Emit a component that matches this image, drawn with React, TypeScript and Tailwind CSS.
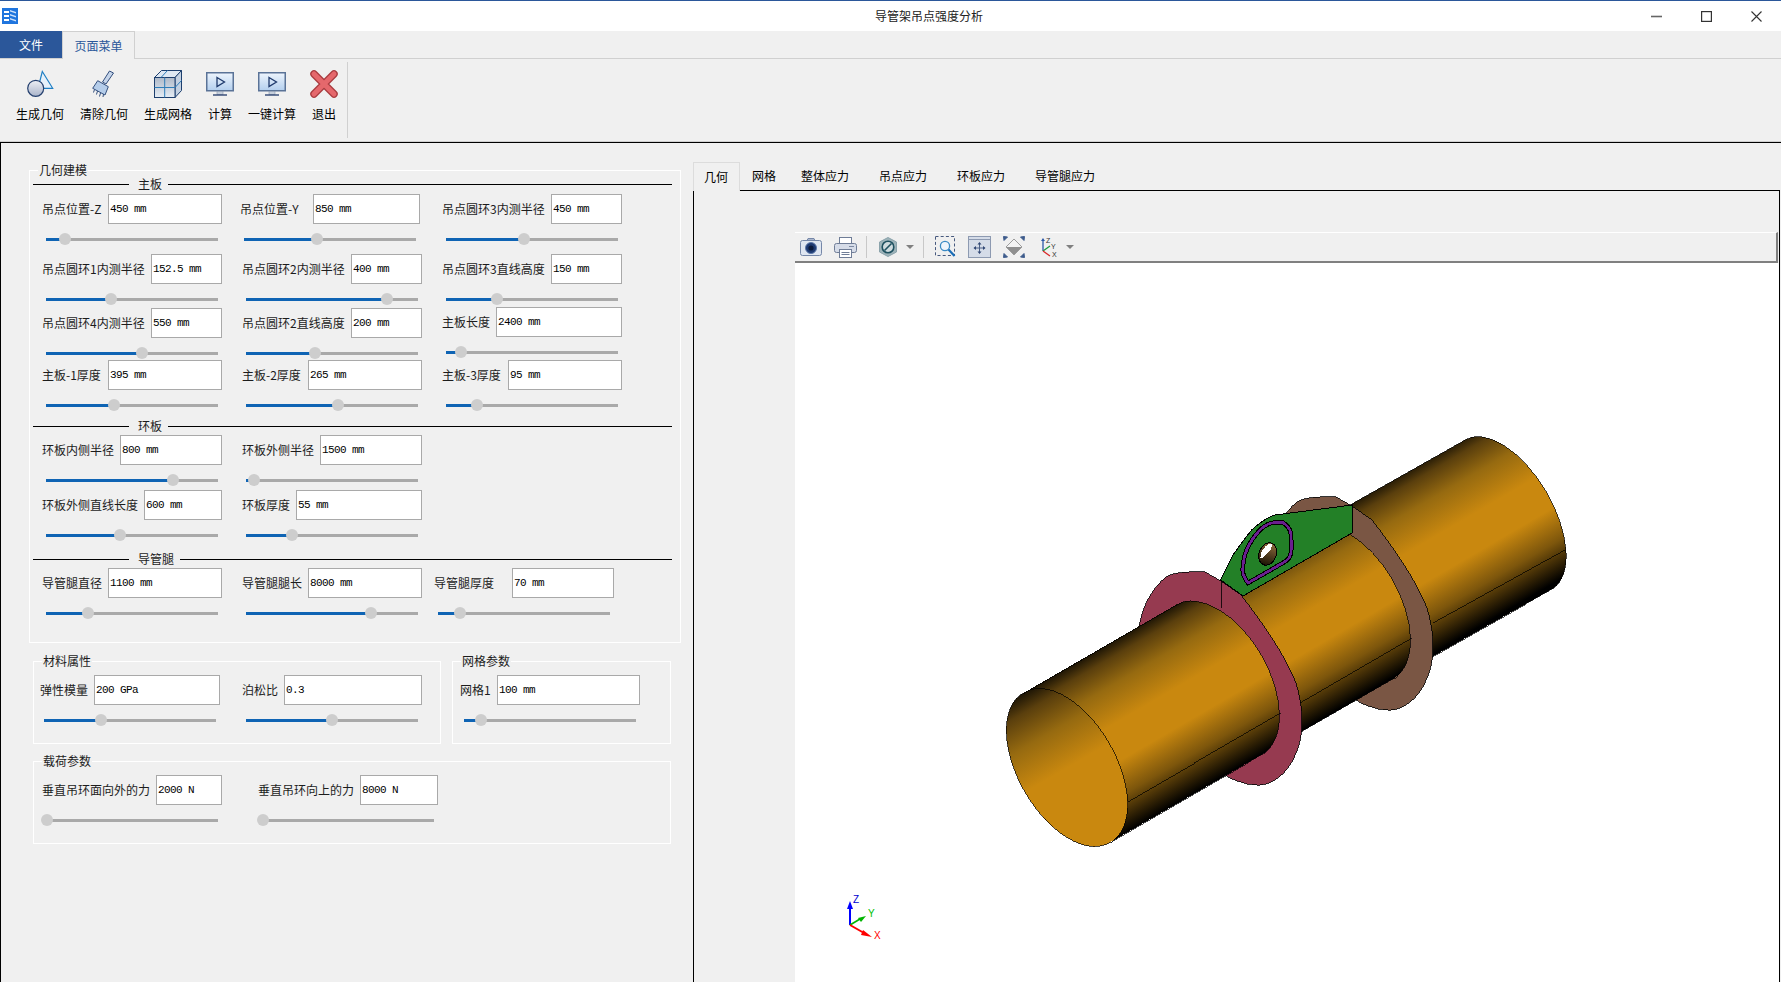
const BG = "#f0f0f0";

interface IField {
  label: string;
  value: string;
  inputW: string;
  pos: number;
  className?: string;
  sliderClass?: string;
}

const Field = ({ label, value, inputW, pos, className = "", sliderClass = "ml-[4px] w-[172px]" }: IField) => {
  return (
    <div className={`w-[180px] shrink-0 ${className}`}>
      <div className="flex items-center justify-between h-[30px]">
        <span className="whitespace-nowrap text-[12px] text-[#1c1c1c]">{label}</span>
        <input
          readOnly
          value={value}
          className={`${inputW} h-[30px] border border-[#a9a9a9] bg-white pl-px text-[11px] tracking-[-0.6px] text-black outline-none font-['Liberation_Mono',monospace]`}
        />
      </div>
      <div className={`relative flex items-center h-[14px] mt-[8px] ${sliderClass}`}>
        <div className="h-[3px] bg-[#0f64b4]" style={{ width: pos }}></div>
        <div className="h-[3px] flex-1 bg-[#a9a9a9]"></div>
        <div className="absolute top-px w-[12px] h-[12px] rounded-full bg-[#cdcdcd]" style={{ left: pos - 6 }}></div>
      </div>
    </div>
  );
};

const SectionLine = ({ title, className }: { title: string; className: string }) => {
  return (
    <div className={`flex items-center h-[16px] ${className}`}>
      <div className="w-[96px] h-px bg-black"></div>
      <span className="ml-[9px] mr-[6px] text-[12px] text-[#1c1c1c]">{title}</span>
      <div className="flex-1 h-px bg-black"></div>
    </div>
  );
};

const Legend = ({ title }: { title: string }) => {
  return (
    <span className="absolute left-[8px] -top-[9px] bg-[#f0f0f0] px-px text-[12px] leading-[16px] text-[#1c1c1c]">{title}</span>
  );
};

const ToolTriangle = () => (
  <svg width="8" height="4" viewBox="0 0 8 4">
    <path d="M0 0H8L4 4Z" fill="#808080" />
  </svg>
);

const ToolSep = ({ className }: { className: string }) => <div className={`w-px h-[22px] bg-[#c8c8c8] ${className}`}></div>;

const Toolbar = () => {
  return (
    <div className="flex items-center h-[31px] mr-px border-t border-t-white border-b-2 border-b-[#808080] border-r-2 border-r-[#808080] bg-[#f0f0f0] shrink-0">
      <svg className="ml-[5px]" width="22" height="18" viewBox="0 0 22 18">
        <rect x="0.5" y="2.5" width="21" height="15" rx="2" fill="#dfe6f1" stroke="#7587a8" />
        <path d="M7 2.5L8 0.5H14L15 2.5Z" fill="#a9b5cb" stroke="#7587a8" />
        <circle cx="11" cy="10" r="5.5" fill="#1e3a72" stroke="#5d79aa" />
        <circle cx="11" cy="10" r="2.6" fill="#0b1a3c" />
      </svg>
      <svg className="ml-[12px]" width="23" height="21" viewBox="0 0 23 21">
        <rect x="5.5" y="0.5" width="12" height="7" fill="#fff" stroke="#6f7d97" />
        <rect x="0.5" y="6.5" width="22" height="9" rx="2" fill="#d6dce8" stroke="#6f7d97" />
        <rect x="5.5" y="12.5" width="12" height="8" fill="#fff" stroke="#6f7d97" />
        <path d="M7.5 15.5H15.5M7.5 17.5H15.5" stroke="#6f7d97" />
        <path d="M15 9.5H20" stroke="#7d8aa3" />
      </svg>
      <ToolSep className="ml-[9px]" />
      <svg className="ml-[12px]" width="18" height="20" viewBox="0 0 18 20">
        <path d="M9 0.5L17.5 5V15L9 19.5L0.5 15V5Z" fill="#9db3b9" stroke="#8ba3ab" />
        <circle cx="9" cy="10" r="5.8" fill="#cfdbde" stroke="#1f5160" strokeWidth="1.6" />
        <path d="M5.5 13.5L12.5 6.5" stroke="#1f5160" strokeWidth="1.6" />
      </svg>
      <div className="ml-[9px] flex"><ToolTriangle /></div>
      <ToolSep className="ml-[9px]" />
      <svg className="ml-[11px]" width="21" height="22" viewBox="0 0 21 22">
        <rect x="0.5" y="0.5" width="19" height="19" fill="none" stroke="#47597e" strokeDasharray="3 2.2" />
        <circle cx="10" cy="10" r="4.6" fill="#eef4fb" stroke="#3a8ac4" strokeWidth="1.3" />
        <path d="M13.5 13.5L19.5 20" stroke="#1c6fb8" strokeWidth="2.2" />
      </svg>
      <svg className="ml-[12px]" width="23" height="22" viewBox="0 0 23 22">
        <rect x="0.5" y="0.5" width="22" height="21" fill="#d5dce8" stroke="#8d9ab1" />
        <path d="M0.5 3.5H22.5" stroke="#8d9ab1" />
        <path d="M11.5 7V17M6.5 12H16.5" stroke="#4a5f86" />
        <path d="M11.5 6L13.5 8.5H9.5ZM11.5 18L9.5 15.5H13.5ZM5.5 12L8 10V14ZM17.5 12L15 14V10Z" fill="#2f4673" />
      </svg>
      <svg className="ml-[12px]" width="22" height="22" viewBox="0 0 22 22">
        <path d="M11 3L19 11H3Z" fill="#f3f3f3" />
        <path d="M3 11H19L11 19Z" fill="#8f8f8f" />
        <path d="M11 3L19 11L11 19L3 11Z" fill="none" stroke="#9c9c9c" />
        <path d="M0.5 0.5L4.5 1L1 4.5ZM21.5 0.5L17.5 1L21 4.5ZM0.5 21.5L4.5 21L1 17.5ZM21.5 21.5L17.5 21L21 17.5Z" fill="#3f5c8c" stroke="#3f5c8c" />
      </svg>
      <svg className="ml-[14px]" width="20" height="21" viewBox="0 0 20 21">
        <path d="M4 14V3" stroke="#2d5aa8" strokeWidth="1.3" />
        <path d="M4 14L11 9" stroke="#1d9a3f" strokeWidth="1.3" />
        <path d="M4 14L11 19" stroke="#d92a2a" strokeWidth="1.3" />
        <path d="M4 1L6 4H2Z" fill="#2d5aa8" />
        <text x="7" y="6" fontSize="7" fontFamily="Liberation Sans" fill="#333">Z</text>
        <text x="12" y="12" fontSize="7" fontFamily="Liberation Sans" fill="#333">Y</text>
        <text x="13" y="20" fontSize="7" fontFamily="Liberation Sans" fill="#333">X</text>
      </svg>
      <div className="ml-[7px] flex"><ToolTriangle /></div>
    </div>
  );
};

const flange = "M1138 640C1138 620 1146 593 1166 577C1176 571 1190 572 1205 572L1221 581L1241 595C1262 622 1285 655 1296 683C1304 710 1304 735 1296 753C1288 775 1270 786 1257 785C1245 785 1233 780 1225 775Z";
const ring = "M1248 583C1244 578 1242.7 574 1242.7 570C1243 563 1244 556 1246.7 550C1250 542 1254 536 1260 530C1264 526 1268 523.5 1273.3 522.7H1283C1287 525 1290 529 1290.7 533C1291.5 540 1291.5 547 1291 553C1290 557 1288 560 1285 561.7Z";

const Model = () => {
  return (
    <svg className="block w-[984px] h-[719px]" viewBox="795 263 984 719" shapeRendering="crispEdges">
      <defs>
        <linearGradient id="body" gradientUnits="userSpaceOnUse" x1="1023.5" y1="693" x2="1110.5" y2="842">
          <stop offset="0" stopColor="#1c1405" />
          <stop offset="0.08" stopColor="#5a3f0d" />
          <stop offset="0.22" stopColor="#966a10" />
          <stop offset="0.42" stopColor="#c9880f" />
          <stop offset="0.62" stopColor="#c9880f" />
          <stop offset="0.8" stopColor="#7d560c" />
          <stop offset="1" stopColor="#000000" />
        </linearGradient>
        <linearGradient id="cap" gradientUnits="userSpaceOnUse" x1="1023.5" y1="693" x2="1067" y2="768">
          <stop offset="0" stopColor="#1c1405" />
          <stop offset="0.2" stopColor="#5a3f0d" />
          <stop offset="0.55" stopColor="#966a10" />
          <stop offset="1" stopColor="#c9880f" />
        </linearGradient>
        <linearGradient id="hole" x1="0" y1="0" x2="0" y2="1">
          <stop offset="0" stopColor="#8c6a3c" />
          <stop offset="1" stopColor="#1c1405" />
        </linearGradient>
      </defs>

      {/* far part of the leg */}
      <path d="M1307.5 529L1466 439.5A86.3 44 60 0 1 1553 588.5L1394.5 678Z" fill="url(#body)" stroke="#000" strokeWidth="0.7" />
      <path d="M1433 623L1565 550" stroke="#000" strokeWidth="0.7" />

      {/* brown ring plate */}
      <path d={flange} transform="translate(131 -75)" fill="#7a5644" stroke="#000" strokeWidth="0.8" />

      {/* middle part */}
      <path d="M1176.5 604.5L1307.5 529A86.3 49 60 0 1 1394.5 678L1263.5 753.5Z" fill="url(#body)" stroke="#000" strokeWidth="0.7" />
      <path d="M1300 703L1412 638" stroke="#000" strokeWidth="0.7" />

      {/* green main plate */}
      <path d="M1220.7 580C1226 569 1230 561 1233 555C1240 545 1246 537 1251.7 530C1258 524 1266 518 1275 515L1352 505V533L1243 596Z" fill="#238027" stroke="#000" strokeWidth="1" />
      <path d={ring} fill="none" stroke="#000" strokeWidth="4.6" />
      <path d={ring} fill="none" stroke="#6a1f8f" strokeWidth="2.6" />
      <ellipse cx="1267.7" cy="554" rx="8.6" ry="11.5" transform="rotate(20 1267.7 554)" fill="url(#hole)" stroke="#000" />
      <path d="M1260.5 558C1260 552 1264 547 1268 544.5L1272.5 544L1270 551L1262 558.5Z" fill="#fff" />

      {/* red ring plate */}
      <path d={flange} fill="#963a50" stroke="#000" strokeWidth="0.8" />
      <path d="M1221 581V608" stroke="#000" strokeWidth="0.8" />

      {/* front part and end face */}
      <path d="M1023.5 693L1176.5 604.5A86.3 49 60 0 1 1263.5 753.5L1110.5 842Z" fill="url(#body)" stroke="#000" strokeWidth="0.7" />
      <path d="M1127.5 801.7L1280.5 713" stroke="#000" strokeWidth="0.7" />
      <path d="M1023.5 693A86.3 47.5 60 1 1 1110.5 842A86.3 47.5 60 1 1 1023.5 693Z" fill="url(#cap)" stroke="#000" strokeWidth="0.7" />

      {/* axis triad */}
      <g shapeRendering="auto">
        <path d="M850 925V905" stroke="#0000ff" strokeWidth="2" />
        <path d="M850 901L853 909H847Z" fill="#0000ff" />
        <path d="M850 925L860 919" stroke="#00b400" strokeWidth="1.6" />
        <path d="M866 916L858 918L861 922Z" fill="#00b400" />
        <path d="M850 925L864 933" stroke="#ff0000" strokeWidth="2" />
        <path d="M872 937L863 930L861 935Z" fill="#ff0000" />
        <text x="853" y="903" fontSize="10" fontFamily="Liberation Sans" fill="#0000d0">Z</text>
        <text x="868" y="917" fontSize="10" fontFamily="Liberation Sans" fill="#00c000">Y</text>
        <text x="874" y="939" fontSize="10" fontFamily="Liberation Sans" fill="#ff0000">X</text>
      </g>
    </svg>
  );
};

const RibbonBtn = ({ label, className, children }: { label: string; className: string; children: React.ReactNode }) => {
  return (
    <div className={`flex flex-col items-center ${className}`}>
      <div className="flex items-center justify-center h-[28px]">{children}</div>
      <span className="mt-[8px] text-[12px] leading-[16px] whitespace-nowrap text-black">{label}</span>
    </div>
  );
};

const MonitorIcon = () => (
  <svg width="28" height="24" viewBox="0 0 28 24">
    <defs>
      <linearGradient id="scr" x1="0" y1="0" x2="0" y2="1">
        <stop offset="0" stopColor="#eef5fd" />
        <stop offset="1" stopColor="#b3cfee" />
      </linearGradient>
    </defs>
    <rect x="0.75" y="0.75" width="26.5" height="18" fill="url(#scr)" stroke="#5a7397" strokeWidth="1.5" />
    <path d="M11 5.5L18.5 10L11 14.5Z" fill="none" stroke="#1f3a6c" strokeWidth="1.3" />
    <rect x="11" y="19.5" width="6" height="3" fill="#c6cfdc" stroke="#8b98ad" strokeWidth="0.6" />
    <path d="M7 23H21" stroke="#2f4673" strokeWidth="1.4" />
  </svg>
);

export default function App() {
  return (
    <div className="w-screen h-screen overflow-hidden flex flex-col bg-[#f0f0f0] font-['Noto_Sans_CJK_SC','Noto_Sans',sans-serif]">
      {/* title bar */}
      <div className="flex items-center h-[31px] shrink-0 bg-white border-t border-t-[#2b579a]">
        <svg className="ml-[2px]" width="16" height="16" viewBox="0 0 16 16">
          <rect width="16" height="16" fill="#1f75de" />
          <path d="M2 3H7V5H2ZM2 7H7V9H2ZM2 11H7V13H2Z" fill="#fff" />
          <path d="M8 2L14 4V5.5L8 3.5ZM8 6L14 8V9.5L8 7.5ZM8 10L14 12V13.5L8 11.5Z" fill="#cfe2fa" />
        </svg>
        <span className="ml-[857px] text-[12px] text-[#222] whitespace-nowrap">导管架吊点强度分析</span>
        <div className="ml-auto flex items-center mr-[19px] gap-[39px]">
          <svg width="11" height="11" viewBox="0 0 11 11">
            <path d="M0 5.5H11" stroke="#666" strokeWidth="1.6" />
          </svg>
          <svg width="11" height="11" viewBox="0 0 11 11">
            <rect x="0.6" y="0.6" width="9.8" height="9.8" fill="none" stroke="#333" strokeWidth="1.2" />
          </svg>
          <svg width="11" height="11" viewBox="0 0 11 11">
            <path d="M0.5 0.5L10.5 10.5M10.5 0.5L0.5 10.5" stroke="#333" strokeWidth="1.1" />
          </svg>
        </div>
      </div>

      {/* ribbon tabs */}
      <div className="flex h-[27px] shrink-0">
        <div className="w-[62px] flex items-center justify-center bg-[#2b579a] text-white text-[12px]">文件</div>
        <div className="relative z-10 w-[73px] h-[28px] flex items-center justify-center bg-[#f0f0f0] border border-b-0 border-[#d0d0d0] text-[#2b579a] text-[12px]">页面菜单</div>
      </div>

      {/* ribbon */}
      <div className="flex h-[84px] shrink-0 pt-[11px] pl-[16px] border-t border-b border-[#d0d0d0]">
        <RibbonBtn label="生成几何" className="w-[48px]">
          <svg width="28" height="28" viewBox="0 0 28 28">
            <defs>
              <linearGradient id="ball" x1="0" y1="0" x2="0" y2="1">
                <stop offset="0" stopColor="#eef0f5" />
                <stop offset="1" stopColor="#a9b3c9" />
              </linearGradient>
            </defs>
            <path d="M16.3 1.5L26.7 18.3H12Z" fill="#e6f1fa" stroke="#1f7fc4" strokeWidth="1.2" />
            <circle cx="9.7" cy="18.3" r="8" fill="url(#ball)" stroke="#243f6e" strokeWidth="1.2" />
          </svg>
        </RibbonBtn>
        <RibbonBtn label="清除几何" className="w-[48px] ml-[16px]">
          <svg width="28" height="28" viewBox="0 0 28 28">
            <path d="M19.5 1L23.5 3L16 14L12.5 12Z" fill="#c6d5ea" stroke="#334f7e" />
            <path d="M7.7 10.7L18.3 16.7L15 25L2.7 18.3Z" fill="#b5cdea" stroke="#334f7e" />
            <path d="M4.5 19.5L3.5 22.5M7.5 21L6.5 24.5M10.5 23L9.5 26.5M13.5 24L13 27" stroke="#334f7e" />
          </svg>
        </RibbonBtn>
        <RibbonBtn label="生成网格" className="w-[48px] ml-[16px]">
          <svg width="28" height="28" viewBox="0 0 28 28">
            <defs>
              <linearGradient id="front" x1="0" y1="0" x2="0" y2="1">
                <stop offset="0" stopColor="#aeb9c8" />
                <stop offset="1" stopColor="#e6edf5" />
              </linearGradient>
            </defs>
            <path d="M0.5 7.5L7.5 0.5H27.5L21 7.5Z" fill="#dde7f2" stroke="#1d3f6e" />
            <path d="M21 7.5L27.5 0.5V20.5L21 27.5Z" fill="#c3d1e2" stroke="#1d3f6e" />
            <rect x="0.5" y="7.5" width="20.5" height="20" fill="url(#front)" stroke="#1d3f6e" />
            <path d="M10.7 7.5V27.5M0.5 17.5H21M7 7.5L13.5 0.5M21 17.5L27.5 10.5" stroke="#2e7db8" />
          </svg>
        </RibbonBtn>
        <RibbonBtn label="计算" className="w-[28px] ml-[14px]">
          <MonitorIcon />
        </RibbonBtn>
        <RibbonBtn label="一键计算" className="w-[48px] ml-[14px]">
          <MonitorIcon />
        </RibbonBtn>
        <RibbonBtn label="退出" className="w-[28px] ml-[14px]">
          <svg width="28" height="28" viewBox="0 0 28 28">
            <path d="M4 4L24 24M24 4L4 24" stroke="#a93b3f" strokeWidth="7.5" strokeLinecap="round" />
            <path d="M4 4L24 24M24 4L4 24" stroke="#e5686c" strokeWidth="5" strokeLinecap="round" />
          </svg>
        </RibbonBtn>
        <div className="ml-[9px] w-px h-[76px] -mt-[8px] bg-[#d0d0d0]"></div>
      </div>

      {/* main area */}
      <div className="flex flex-1 min-h-0 border-t border-black">
        {/* parameter forms */}
        <div className="w-[693px] shrink-0 border-l border-black">
          <div className="relative ml-[28px] mt-[27px] w-[652px] h-[473px] border border-white pt-[5px] pl-[3px] pr-[8px]">
            <Legend title="几何建模" />
            <SectionLine title="主板" className="" />
            <div className="flex gap-[20px] pl-[9px] mt-[2px]">
              <Field label="吊点位置-Z" value="450 mm" inputW="w-[114px]" pos={19} />
              <Field label="吊点位置-Y" value="850 mm" inputW="w-[107px]" pos={73} className="-ml-[2px] mr-[2px]" />
              <Field label="吊点圆环3内测半径" value="450 mm" inputW="w-[71px]" pos={78} />
            </div>
            <div className="flex gap-[20px] pl-[9px] mt-[8px]">
              <Field label="吊点圆环1内测半径" value="152.5 mm" inputW="w-[71px]" pos={65} />
              <Field label="吊点圆环2内测半径" value="400 mm" inputW="w-[71px]" pos={141} />
              <Field label="吊点圆环3直线高度" value="150 mm" inputW="w-[71px]" pos={51} />
            </div>
            <div className="flex gap-[20px] pl-[9px] mt-[2px]">
              <Field label="吊点圆环4内测半径" value="550 mm" inputW="w-[71px]" pos={96} />
              <Field label="吊点圆环2直线高度" value="200 mm" inputW="w-[71px]" pos={69} />
              <Field label="主板长度" value="2400 mm" inputW="w-[126px]" pos={15} className="-mt-px" />
            </div>
            <div className="flex gap-[20px] pl-[9px]">
              <Field label="主板-1厚度" value="395 mm" inputW="w-[114px]" pos={68} />
              <Field label="主板-2厚度" value="265 mm" inputW="w-[114px]" pos={92} />
              <Field label="主板-3厚度" value="95 mm" inputW="w-[114px]" pos={31} />
            </div>
            <SectionLine title="环板" className="mt-[6px]" />
            <div className="flex gap-[20px] pl-[9px] mt-px">
              <Field label="环板内侧半径" value="800 mm" inputW="w-[102px]" pos={127} />
              <Field label="环板外侧半径" value="1500 mm" inputW="w-[102px]" pos={8} />
            </div>
            <div className="flex gap-[20px] pl-[9px] mt-[3px]">
              <Field label="环板外侧直线长度" value="600 mm" inputW="w-[78px]" pos={74} />
              <Field label="环板厚度" value="55 mm" inputW="w-[126px]" pos={46} />
            </div>
            <SectionLine title="导管腿" className="mt-[9px]" />
            <div className="flex gap-[20px] pl-[9px] mt-px">
              <Field label="导管腿直径" value="1100 mm" inputW="w-[114px]" pos={42} />
              <Field label="导管腿腿长" value="8000 mm" inputW="w-[114px]" pos={125} />
              <Field label="导管腿厚度" value="70 mm" inputW="w-[102px]" pos={22} className="-ml-[8px]" />
            </div>
          </div>

          <div className="flex ml-[32px] mt-[18px] gap-[11px]">
            <div className="relative w-[408px] h-[83px] border border-white pt-[13px] pl-[6px] flex gap-[22px]">
              <Legend title="材料属性" />
              <Field label="弹性模量" value="200 GPa" inputW="w-[126px]" pos={57} />
              <Field label="泊松比" value="0.3" inputW="w-[138px]" pos={86} />
            </div>
            <div className="relative w-[219px] h-[83px] border border-white pt-[13px] pl-[7px]">
              <Legend title="网格参数" />
              <Field label="网格1" value="100 mm" inputW="w-[143px]" pos={17} />
            </div>
          </div>

          <div className="relative ml-[32px] mt-[17px] w-[638px] h-[83px] border border-white pt-[13px] pl-[8px] flex gap-[36px]">
            <Legend title="载荷参数" />
            <Field label="垂直吊环面向外的力" value="2000 N" inputW="w-[66px]" pos={1} />
            <Field label="垂直吊环向上的力" value="8000 N" inputW="w-[78px]" pos={5} sliderClass="w-[176px]" />
          </div>
        </div>

        {/* result tabs and viewer */}
        <div className="flex-1 min-w-0 flex flex-col pt-[19px]">
          <div className="flex h-[28px] shrink-0 text-[12px] text-black">
            <div className="relative z-10 w-[47px] h-[29px] pl-[10px] flex items-center bg-[#f0f0f0] border border-b-0 border-[#dcdcdc]">几何</div>
            <div className="pl-[12px] pr-[25px] flex items-center">网格</div>
            <div className="pr-[15px] flex items-center">整体应力</div>
            <div className="px-[15px] flex items-center">吊点应力</div>
            <div className="px-[15px] flex items-center">环板应力</div>
            <div className="px-[15px] flex items-center">导管腿应力</div>
          </div>
          <div className="flex-1 min-h-0 mr-px border border-b-0 border-black pl-[101px] pt-[41px] flex flex-col">
            <Toolbar />
            <div className="flex-1 min-h-0 bg-white">
              <Model />
            </div>
          </div>
        </div>
      </div>
    </div>
  );
}
